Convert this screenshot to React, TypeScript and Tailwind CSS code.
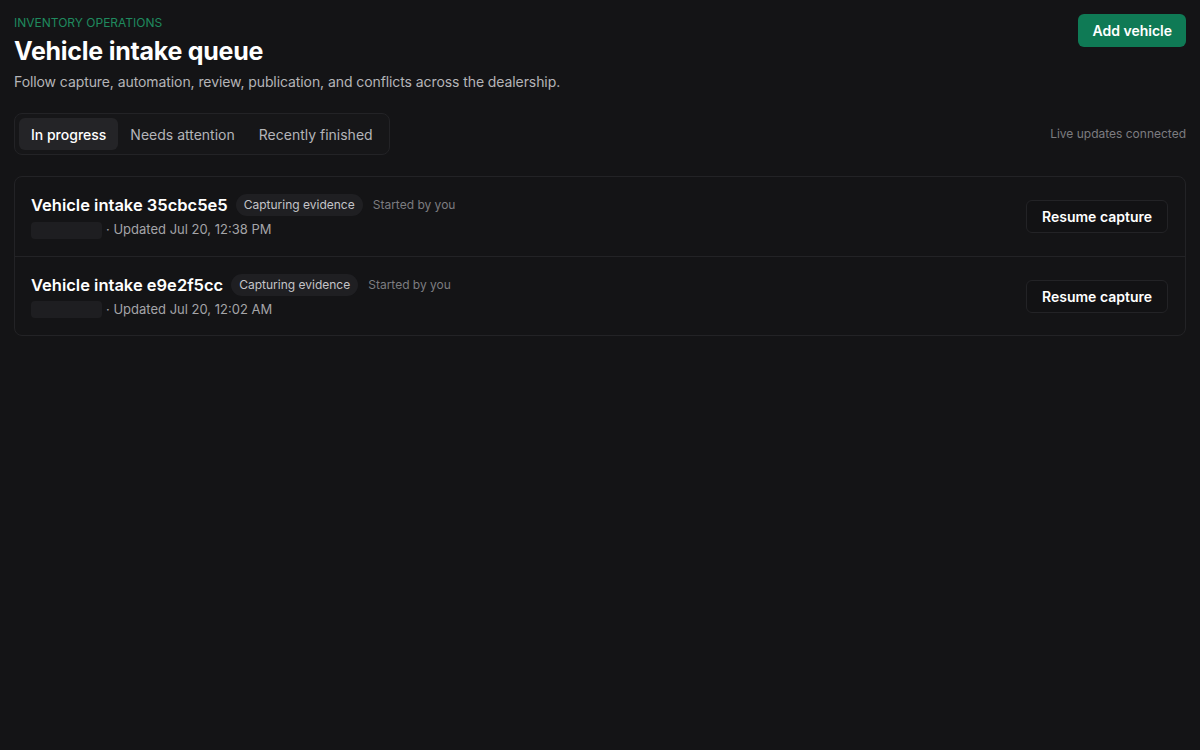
const tabs = ["In progress", "Needs attention", "Recently finished"];

const intakes = [
  { id: "35cbc5e5", updated: "Jul 20, 12:38 PM" },
  { id: "e9e2f5cc", updated: "Jul 20, 12:02 AM" },
];

export default function App() {
  return (
    <div
      className="min-h-[750px] bg-[#141416] px-[14px] pt-[14px] text-white"
      style={{ fontFamily: "Inter, 'Noto Sans', sans-serif" }}
    >
      <div className="flex items-start justify-between">
        <div>
          <p className="mt-[1px] text-[12px] uppercase leading-4 text-[#1f8a5e]">
            Inventory operations
          </p>
          <h1 className="mt-[4px] text-[25px] font-bold leading-8 tracking-[-0.01em]">
            Vehicle intake queue
          </h1>
          <p className="mt-[5px] text-[14px] leading-5 tracking-[-0.006em] text-[#b4b4b8]">
            Follow capture, automation, review, publication, and conflicts
            across the dealership.
          </p>
        </div>
        <button
          className="h-[33px] rounded-md bg-[#0f7a55] px-[14px] text-[14px] font-semibold text-white"
          type="button"
        >
          Add vehicle
        </button>
      </div>

      <div className="mt-[21px] flex items-center justify-between">
        <div className="flex h-[42px] items-center rounded-lg border border-[#232326] bg-[#161618] px-[4px]">
          {tabs.map((tab, i) => (
            <button
              className={`h-[32px] rounded-md px-[12px] text-[14px] ${
                i === 0
                  ? "bg-[#242427] font-medium text-white"
                  : "text-[#b4b4b8]"
              }`}
              key={tab}
              type="button"
            >
              {tab}
            </button>
          ))}
        </div>
        <span className="text-[12px] text-[#7c7c80]">
          Live updates connected
        </span>
      </div>

      <div className="mt-[21px] rounded-lg border border-[#232326]">
        {intakes.map((intake, i) => (
          <div
            className={`flex h-[79px] items-center justify-between pl-[16px] pr-[17px] ${
              i > 0 ? "border-t border-[#232326]" : ""
            }`}
            key={intake.id}
          >
            <div>
              <div className="flex items-center gap-[8px]">
                <span className="text-[16.5px] font-semibold leading-6">
                  Vehicle intake {intake.id}
                </span>
                <span className="rounded-full bg-[#1f1f22] px-[8px] py-[2px] text-[12px] text-[#c4c4c8]">
                  Capturing evidence
                </span>
                <span className="ml-[2px] text-[12px] text-[#7c7c80]">
                  Started by you
                </span>
              </div>
              <div className="mt-[3px] flex items-center gap-[4px] text-[13px] text-[#a4a4a8]">
                <span className="inline-block h-[17px] w-[71px] rounded-sm bg-[#1e1e21]" />
                <span>· Updated {intake.updated}</span>
              </div>
            </div>
            <button
              className="h-[33px] rounded-md border border-[#232326] bg-[#121214] px-[15px] text-[14px] font-semibold text-white"
              type="button"
            >
              Resume capture
            </button>
          </div>
        ))}
      </div>
    </div>
  );
}
